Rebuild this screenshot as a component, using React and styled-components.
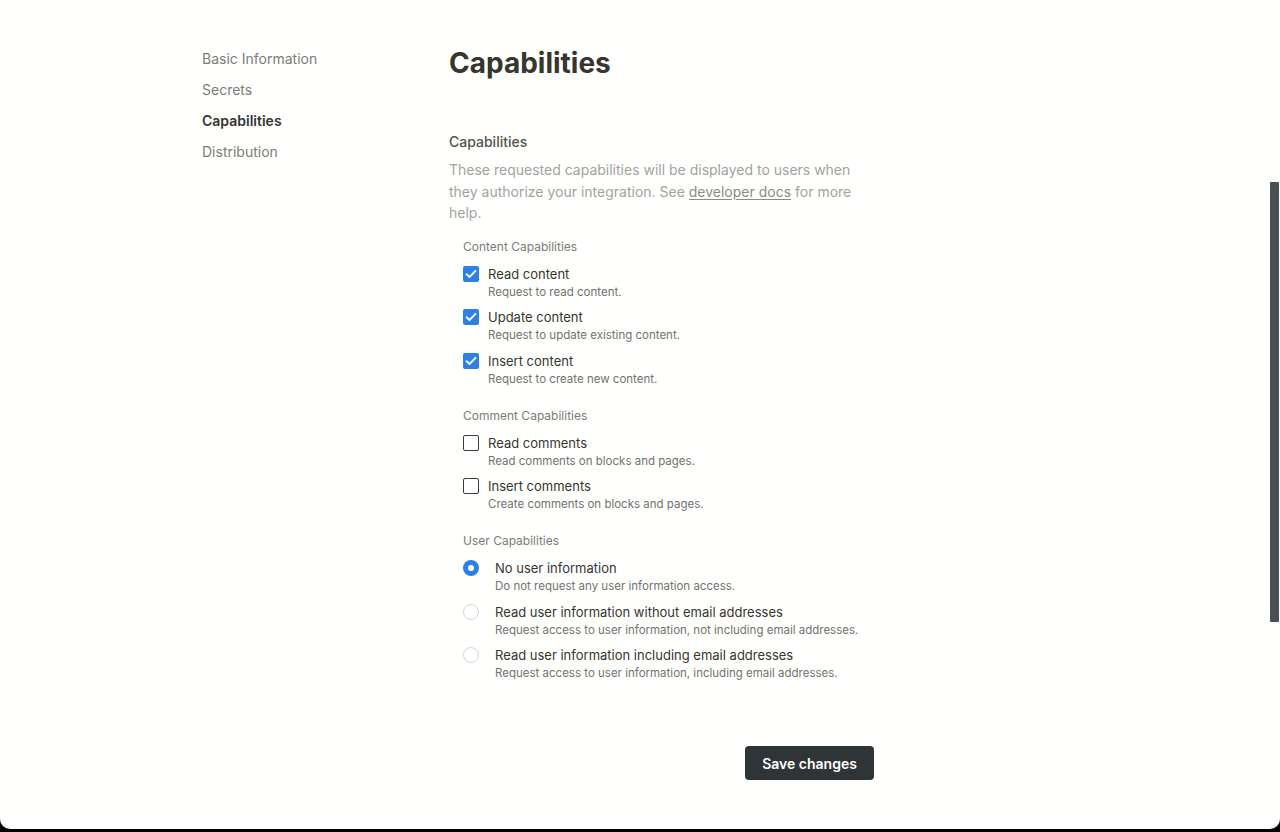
import React, { useState } from "react";
import styled, { createGlobalStyle } from "styled-components";

const GlobalStyle = createGlobalStyle`
    html, body {
        margin: 0;
        padding: 0;
        background: #000000;
    }
    * {
        box-sizing: border-box;
    }
    body {
        font-family: Inter, "Noto Sans", "Liberation Sans", sans-serif;
        -webkit-font-smoothing: antialiased;
    }
`;

const Window = styled.div`
    position: relative;
    height: 829px;
    background: #fffffe;
    border-radius: 0 0 10px 10px;
    overflow: hidden;
`;

const ScrollThumb = styled.div`
    position: absolute;
    top: 182px;
    right: 1px;
    width: 9px;
    height: 440px;
    background: #4a4f54;
    border-radius: 1px;
`;

const Layout = styled.div`
    display: flex;
    flex-direction: row;
    padding: 43px 0 0 202px;
`;

const Sidebar = styled.nav`
    width: 247px;
    display: flex;
    flex-direction: column;
`;

const NavItem = styled.div`
    font-size: 14px;
    line-height: 31px;
    color: ${(p) => (p.$active ? "#37352f" : "#7d7c78")};
    font-weight: ${(p) => (p.$active ? 600 : 400)};
    cursor: pointer;
`;

const Main = styled.main`
    width: 425px;
    display: flex;
    flex-direction: column;
`;

const Title = styled.h1`
    margin: 2px 0 0;
    font-size: 28px;
    line-height: 36px;
    font-weight: 700;
    color: #37352f;
`;

const SectionLabel = styled.div`
    margin-top: 51px;
    font-size: 14px;
    line-height: 20px;
    font-weight: 500;
    color: #55534e;
`;

const Description = styled.p`
    margin: 7px 0 0;
    font-size: 14px;
    line-height: 21.5px;
    color: #a3a29f;
`;

const DocLink = styled.a`
    color: #8c8b88;
    text-decoration: underline;
    text-underline-offset: 2px;
    cursor: pointer;
`;

const Group = styled.div`
    display: flex;
    flex-direction: column;
    padding-left: 14px;
    margin-top: ${(p) => p.$top}px;
`;

const GroupLabel = styled.div`
    font-size: 12px;
    line-height: 16px;
    color: #7d7c78;
    margin-bottom: 9px;
`;

const Row = styled.label`
    display: flex;
    flex-direction: row;
    align-items: flex-start;
    gap: ${(p) => p.$gap}px;
    height: 36px;
    margin-bottom: 7.5px;
    cursor: pointer;

    &:last-child {
        margin-bottom: 0;
    }
`;

const Box = styled.span`
    flex: none;
    width: 16px;
    height: 16px;
    margin-top: 2px;
    border-radius: 2px;
    display: flex;
    align-items: center;
    justify-content: center;
    background: ${(p) => (p.$checked ? "#2f80e5" : "#ffffff")};
    border: ${(p) => (p.$checked ? "none" : "1.5px solid #3a3a3a")};
`;

const Radio = styled.span`
    flex: none;
    width: 16px;
    height: 16px;
    margin-top: 2px;
    border-radius: 50%;
    display: flex;
    align-items: center;
    justify-content: center;
    background: ${(p) => (p.$checked ? "#2f80e5" : "#ffffff")};
    border: ${(p) => (p.$checked ? "none" : "1px solid #d6d6d4")};

    &::after {
        content: "";
        display: ${(p) => (p.$checked ? "block" : "none")};
        width: 6px;
        height: 6px;
        border-radius: 50%;
        background: #ffffff;
    }
`;

const RowText = styled.div`
    display: flex;
    flex-direction: column;
`;

const RowTitle = styled.div`
    font-size: 13px;
    line-height: 20px;
    color: #37352f;
    white-space: nowrap;
`;

const RowDesc = styled.div`
    font-size: 11.5px;
    line-height: 16px;
    color: #73726e;
    white-space: nowrap;
`;

const Footer = styled.div`
    display: flex;
    justify-content: flex-end;
    margin-top: 65px;
`;

const SaveButton = styled.button`
    width: 129px;
    height: 34px;
    border: none;
    border-radius: 4px;
    background: #2f3437;
    color: #ffffff;
    font-family: inherit;
    font-size: 14px;
    font-weight: 600;
    cursor: pointer;

    &:hover {
        opacity: 0.9;
    }
`;

function Check() {
    return (
        <svg width="12" height="10" viewBox="0 0 12 10" fill="none">
            <path d="M1.5 5.2 L4.5 8 L10.5 1.8" stroke="#ffffff" strokeWidth="1.8" strokeLinecap="round" strokeLinejoin="round" />
        </svg>
    );
}

const contentCaps = [
    { id: "read", title: "Read content", desc: "Request to read content." },
    { id: "update", title: "Update content", desc: "Request to update existing content." },
    { id: "insert", title: "Insert content", desc: "Request to create new content." },
];

const commentCaps = [
    { id: "readComments", title: "Read comments", desc: "Read comments on blocks and pages." },
    { id: "insertComments", title: "Insert comments", desc: "Create comments on blocks and pages." },
];

const userCaps = [
    { id: "none", title: "No user information", desc: "Do not request any user information access." },
    { id: "noEmail", title: "Read user information without email addresses", desc: "Request access to user information, not including email addresses." },
    { id: "email", title: "Read user information including email addresses", desc: "Request access to user information, including email addresses." },
];

export default function App() {
    const [checked, setChecked] = useState({ read: true, update: true, insert: true });
    const [userCap, setUserCap] = useState("none");

    const toggle = (id) => setChecked((c) => ({ ...c, [id]: !c[id] }));

    return (
        <>
            <GlobalStyle />
            <Window>
                <Layout>
                    <Sidebar>
                        <NavItem>Basic Information</NavItem>
                        <NavItem>Secrets</NavItem>
                        <NavItem $active>Capabilities</NavItem>
                        <NavItem>Distribution</NavItem>
                    </Sidebar>
                    <Main>
                        <Title>Capabilities</Title>
                        <SectionLabel>Capabilities</SectionLabel>
                        <Description>
                            These requested capabilities will be displayed to users when they authorize your
                            integration. See <DocLink>developer docs</DocLink> for more help.
                        </Description>

                        <Group $top={15}>
                            <GroupLabel>Content Capabilities</GroupLabel>
                            {contentCaps.map((c) => (
                                <Row key={c.id} $gap={9} onClick={() => toggle(c.id)}>
                                    <Box $checked={!!checked[c.id]}>{checked[c.id] && <Check />}</Box>
                                    <RowText>
                                        <RowTitle>{c.title}</RowTitle>
                                        <RowDesc>{c.desc}</RowDesc>
                                    </RowText>
                                </Row>
                            ))}
                        </Group>

                        <Group $top={21}>
                            <GroupLabel>Comment Capabilities</GroupLabel>
                            {commentCaps.map((c) => (
                                <Row key={c.id} $gap={9} onClick={() => toggle(c.id)}>
                                    <Box $checked={!!checked[c.id]}>{checked[c.id] && <Check />}</Box>
                                    <RowText>
                                        <RowTitle>{c.title}</RowTitle>
                                        <RowDesc>{c.desc}</RowDesc>
                                    </RowText>
                                </Row>
                            ))}
                        </Group>

                        <Group $top={21}>
                            <GroupLabel>User Capabilities</GroupLabel>
                            {userCaps.map((c) => (
                                <Row key={c.id} $gap={16} onClick={() => setUserCap(c.id)}>
                                    <Radio $checked={userCap === c.id} />
                                    <RowText>
                                        <RowTitle>{c.title}</RowTitle>
                                        <RowDesc>{c.desc}</RowDesc>
                                    </RowText>
                                </Row>
                            ))}
                        </Group>

                        <Footer>
                            <SaveButton>Save changes</SaveButton>
                        </Footer>
                    </Main>
                </Layout>
                <ScrollThumb />
            </Window>
        </>
    );
}
